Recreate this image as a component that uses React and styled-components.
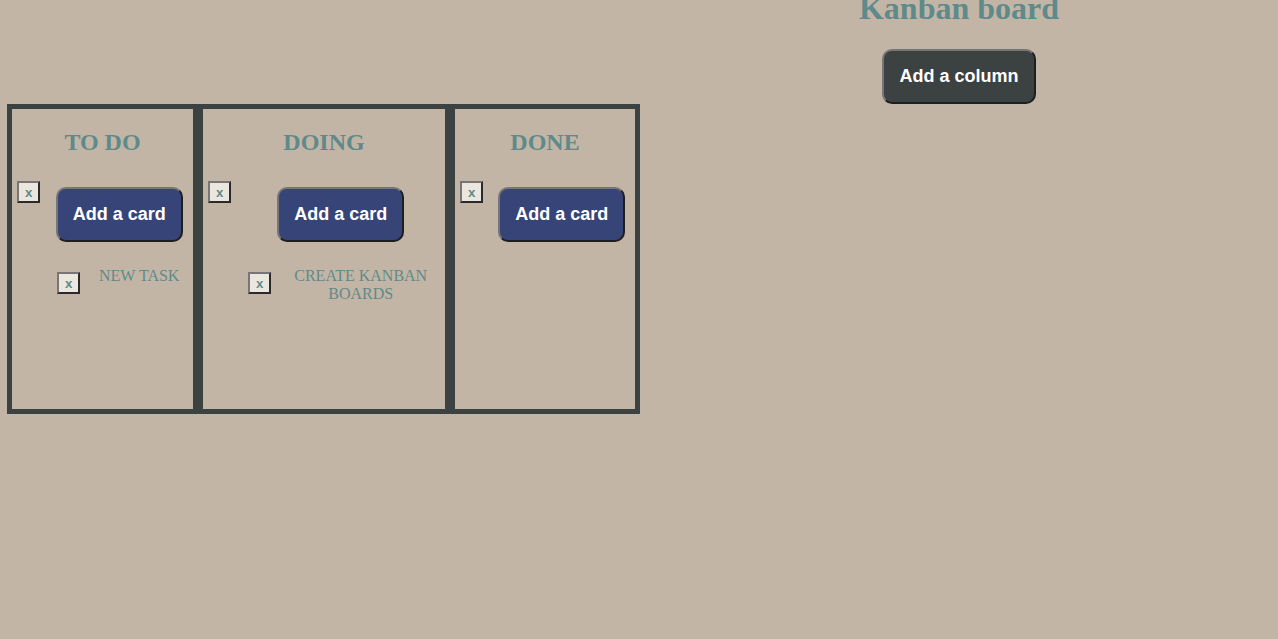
import React from 'react'
import styled, { createGlobalStyle } from 'styled-components'

const GlobalStyle = createGlobalStyle`
html, body {
  margin: 0;
  padding: 0;
  background: #c3b5a5;
  overflow: hidden;
}
body {
  font-family: 'Liberation Serif', 'Times New Roman', serif;
}
`

const Page = styled.div`
display: flex;
align-items: flex-start;
width: 1278px;
height: 639px;
`

const Board = styled.div`
display: flex;
margin: 104px 0 0 7px;
`

const Column = styled.div`
box-sizing: content-box;
width: ${p => p.$width}px;
height: 300px;
border: 5px solid #3c4142;
display: flex;
flex-direction: column;
`

const ColumnTitle = styled.h2`
margin: 19.92px 0;
font-size: 24px;
line-height: 27.6px;
font-weight: bold;
text-align: center;
color: #5f8a8b;
`

const HeaderRow = styled.div`
display: flex;
align-items: flex-start;
`

const DeleteButton = styled.button`
flex: none;
margin: ${p => (p.$card ? '5px 0 0 0' : '5px 0 0 5px')};
padding: 1px 6px;
height: 22px;
font-family: 'Liberation Sans', Arial, sans-serif;
font-size: 13.33px;
font-weight: bold;
line-height: 15px;
color: #5f8a8b;
background: #ece7de;
border: 2px solid;
border-color: #767676 #2a2a2a #2a2a2a #767676;
`

const Centered = styled.div`
flex: 1;
display: flex;
justify-content: center;
padding-left: 5px;
`

const BigButton = styled.button`
margin-top: ${p => p.$top || 0}px;
padding: 15px;
font-family: 'Liberation Sans', Arial, sans-serif;
font-size: 18px;
font-weight: bold;
line-height: 20.7px;
color: #ffffff;
background: ${p => p.$bg};
border: 2px solid;
border-color: #767676 #1e1e1e #1e1e1e #767676;
border-radius: 10px;
white-space: nowrap;
`

const Card = styled.div`
display: flex;
align-items: flex-start;
margin: 25.6px 0 0 45px;
`

const CardText = styled.div`
flex: 1;
padding-left: 5px;
font-size: 16px;
line-height: 17.4px;
text-align: center;
text-transform: uppercase;
color: #5f8a8b;
`

const Header = styled.div`
flex: 1;
display: flex;
flex-direction: column;
align-items: center;
`

const Title = styled.h1`
margin: -10px 0 22.5px;
font-size: 32px;
line-height: 36.8px;
font-weight: bold;
color: #5f8a8b;
`

const columns = [
  { title: 'TO DO', width: 181, cards: ['New task'] },
  { title: 'DOING', width: 242, cards: ['Create kanban boards'] },
  { title: 'DONE', width: 180, cards: [] },
]

const App = () => {
  return (
    <Page>
      <GlobalStyle />
      <Board>
        {columns.map(col => (
          <Column key={col.title} $width={col.width}>
            <ColumnTitle>{col.title}</ColumnTitle>
            <HeaderRow>
              <DeleteButton>x</DeleteButton>
              <Centered>
                <BigButton $bg="#374478" $top={10.5}>Add a card</BigButton>
              </Centered>
            </HeaderRow>
            {col.cards.map(card => (
              <Card key={card}>
                <DeleteButton $card>x</DeleteButton>
                <CardText>{card}</CardText>
              </Card>
            ))}
          </Column>
        ))}
      </Board>
      <Header>
        <Title>Kanban board</Title>
        <BigButton $bg="#3c4142">Add a column</BigButton>
      </Header>
    </Page>
  )
}

export default App
